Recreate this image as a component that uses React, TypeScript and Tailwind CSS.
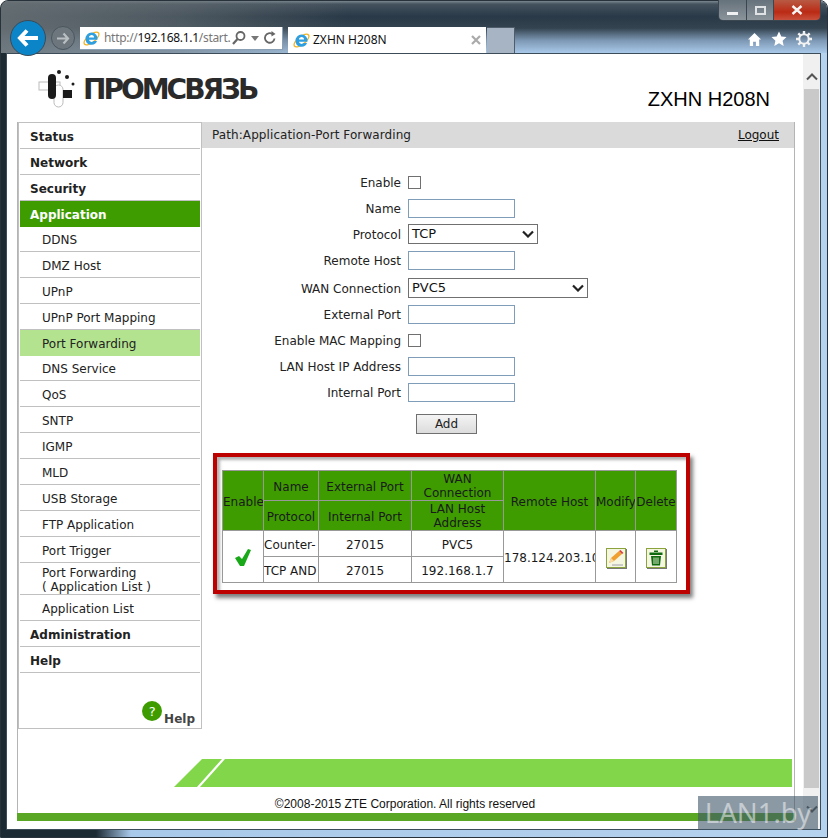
import React from "react";

const menu: { t: string; h: string; top?: boolean; kind?: string }[] = [
  { t: "Status", h: "h-[26px]", top: true },
  { t: "Network", h: "h-[26px]", top: true },
  { t: "Security", h: "h-[26px]", top: true },
  { t: "Application", h: "h-[26px]", top: true, kind: "on" },
  { t: "DDNS", h: "h-[25px]" },
  { t: "DMZ Host", h: "h-[26px]" },
  { t: "UPnP", h: "h-[26px]" },
  { t: "UPnP Port Mapping", h: "h-[26px]" },
  { t: "Port Forwarding", h: "h-[26px]", kind: "sel" },
  { t: "DNS Service", h: "h-[25px]" },
  { t: "QoS", h: "h-[26px]" },
  { t: "SNTP", h: "h-[26px]" },
  { t: "IGMP", h: "h-[26px]" },
  { t: "MLD", h: "h-[26px]" },
  { t: "USB Storage", h: "h-[26px]" },
  { t: "FTP Application", h: "h-[26px]" },
  { t: "Port Trigger", h: "h-[26px]" },
  { t: "Port Forwarding\n( Application List )", h: "h-[32px]" },
  { t: "Application List", h: "h-[26px]" },
  { t: "Administration", h: "h-[26px]", top: true },
  { t: "Help", h: "h-[26px]", top: true },
];

function IE({ s = 17 }: { s?: number }) {
  return (
    <svg width={s} height={s} viewBox="0 0 20 20" className="shrink-0">
      <ellipse cx="10" cy="10" rx="10.500" ry="4.500" transform="rotate(-38 10 10)" fill="none" stroke="#f0b429" strokeWidth="1.500" />
      <path
        d="M10 3a7 7 0 0 0-7 7.500A7 7 0 0 0 16.500 13h-4a3.200 3.200 0 0 1-5.500-1.500h10A7 7 0 0 0 10 3zM7 8.800a3 3 0 0 1 6 0z"
        fill="#2f9fe0"
        fillRule="evenodd"
      />
    </svg>
  );
}

function TextInput() {
  return <input className="w-[107px] h-[19px] border border-[#7f9db9] bg-white" />;
}
function Check() {
  return <span className="block w-[13px] h-[13px] border border-[#707070] bg-white" />;
}
function Sel({ w, v }: { w: string; v: string }) {
  return (
    <div className={`relative ${w} h-[20px] border border-[#707070] bg-white pl-[3px] text-[13px] leading-[17px] text-[#111]`}>
      {v}
      <svg width="12" height="8" viewBox="0 0 12 8" className="absolute right-[3px] top-[5px]">
        <path d="M1 1.500l5 5 5-5" fill="none" stroke="#222" strokeWidth="2.200" />
      </svg>
    </div>
  );
}
function Row({ label, h, children }: { label: string; h: string; children: React.ReactNode }) {
  return (
    <div className={`flex items-center ${h}`}>
      <div className="w-[199px] pt-[2px] text-right text-[#222]">{label}</div>
      <div className="ml-[7px]">{children}</div>
    </div>
  );
}

const th = "border border-[#999] font-normal text-center leading-[14px] px-0 pb-0 pt-[2px] overflow-hidden";
const th2 = "border border-[#999] font-normal text-center leading-[14px] px-0 pb-0 pt-[1px] overflow-hidden";
const td = "border border-[#999] text-center px-0 pb-0 pt-[2px] overflow-hidden whitespace-nowrap";

export default function App() {
  return (
    <div className="relative w-[828px] h-[838px] overflow-hidden bg-white font-['DejaVu_Sans',sans-serif] text-[12px]">
      <div className="w-full h-full flex flex-col rounded-t-[8px] border border-[#27323a] overflow-hidden bg-[linear-gradient(90deg,#1c2a34_0,#1c2a34_95px,#a9c9ea_130px,#b5d2ee_100%)]">
        {/* browser chrome */}
        <div className="h-[52px] shrink-0 flex items-start pl-[9px] pr-[15px] bg-[linear-gradient(90deg,rgba(104,112,116,0.9)_0,rgba(104,112,116,0.55)_22%,rgba(0,0,0,0)_42%),linear-gradient(180deg,#7b8890_0,#44525e_6%,#293947_30%,#33434f_52%,#7d98b4_76%,#a9c9ea_100%)]">
          <div className="relative z-10 mt-[19px] w-[36px] h-[36px] rounded-full bg-[#0b85c8] border border-[#3b4a55] flex items-center justify-center shrink-0">
            <svg width="22" height="20" viewBox="0 0 22 20">
              <path d="M10 2.500L3 10l7 7.500M4 10h17" fill="none" stroke="#fff" strokeWidth="4" />
            </svg>
          </div>
          <div className="mt-[25px] ml-[5px] w-[24px] h-[24px] rounded-full border border-[#4a5660] bg-[#6d767c] flex items-center justify-center shrink-0">
            <svg width="14" height="13" viewBox="0 0 14 13">
              <path d="M7.500 1.500L12 6.500l-4.500 5M12 6.500H1" fill="none" stroke="#b9bec2" strokeWidth="2.200" />
            </svg>
          </div>
          <div className="mt-[26px] ml-[5px] w-[203px] h-[23px] bg-white border-b border-r border-[#8aa0b5] flex items-center pl-[3px] shrink-0 font-['Noto_Sans',sans-serif] text-[12px]">
            <IE />
            <span className="ml-[4px] w-[124px] whitespace-nowrap tracking-[-0.3px] text-[#777]">
              http://<span className="text-[#111]">192.168.1.1</span>/start.
            </span>
            <svg width="16" height="16" viewBox="0 0 16 16" className="ml-[3px] shrink-0">
              <circle cx="9.500" cy="6" r="4" fill="none" stroke="#666" strokeWidth="1.800" />
              <path d="M6.500 9L2 14" stroke="#666" strokeWidth="2.200" />
            </svg>
            <svg width="8" height="5" viewBox="0 0 8 5" className="ml-[4px] shrink-0">
              <path d="M0 0h8L4 5z" fill="#777" />
            </svg>
            <svg width="14" height="14" viewBox="0 0 14 14" className="ml-[4px] shrink-0">
              <path d="M11.500 7.500A4.800 4.800 0 1 1 9.500 3" fill="none" stroke="#666" strokeWidth="1.800" />
              <path d="M8.500 0l4 3-4 2.500z" fill="#666" />
            </svg>
          </div>
          <div className="mt-[26px] ml-[5px] w-[198px] h-[26px] bg-white flex items-center pl-[5px] shrink-0 font-['Noto_Sans',sans-serif] text-[12px] text-[#111]">
            <IE />
            <span className="ml-[3px] flex-1">ZXHN H208N</span>
            <svg width="10" height="10" viewBox="0 0 10 10" className="mr-[5px]">
              <path d="M1 1l8 8M9 1L1 9" stroke="#aaa" strokeWidth="2.200" />
            </svg>
          </div>
          <div className="mt-[26px] ml-[1px] w-[28px] h-[26px] bg-[#a6b4c4] border-r border-t border-[#4f5d6a] shrink-0" />
          <div className="flex-1" />
          <div className="mt-[30px] flex items-center gap-[9px] text-white">
            <svg width="15" height="15" viewBox="0 0 16 16">
              <path d="M8 1L1 8h2v7h3.500v-4.500h3V15H13V8h2z" fill="#fff" />
            </svg>
            <svg width="16" height="16" viewBox="0 0 16 16">
              <path d="M8 .5l2.300 5 5.200.6-3.900 3.600 1.100 5.300L8 12.300 3.300 15l1.100-5.300L.5 6.100l5.200-.6z" fill="#fff" />
            </svg>
            <svg width="16" height="16" viewBox="0 0 16 16">
              <circle cx="8" cy="8" r="4.700" fill="none" stroke="#f2f2f2" strokeWidth="2" />
              <path d="M8 0v3M8 13v3M0 8h3M13 8h3M2.300 2.300l2.200 2.200M11.500 11.500l2.200 2.200M13.700 2.300l-2.200 2.200M4.500 11.500l-2.200 2.200" stroke="#f2f2f2" strokeWidth="2.400" />
            </svg>
          </div>
        </div>

        {/* page frame */}
        <div className="relative flex-1 min-h-0 ml-[5px] mr-[6px] mb-[7px] flex bg-white border border-[#3c4c59]">
          <div className="flex-1 min-w-0 pl-[10px] pr-[8px] flex flex-col">
            <div className="h-[68px] shrink-0 flex items-start pl-[21px]">
              <svg width="38" height="42" viewBox="0 0 38 42" className="mt-[15px] shrink-0">
                <rect x="1" y="13" width="21" height="8" fill="#fff" stroke="#bbb" />
                <rect x="16" y="16" width="9" height="22" rx="4.500" fill="#fff" stroke="#bbb" />
                <rect x="10" y="5" width="8" height="25" rx="4" fill="#1b1b1b" />
                <rect x="25" y="21" width="9" height="8" fill="#1b1b1b" />
                <circle cx="21" cy="3" r="2" fill="#1b1b1b" />
                <circle cx="29" cy="8" r="2" fill="#1b1b1b" />
                <circle cx="35" cy="15" r="1.500" fill="#1b1b1b" />
              </svg>
              <div className="ml-[7px] mt-[19px] text-[28px] leading-[34px] font-bold tracking-[-3px] text-[#2a2a2a] whitespace-nowrap">
                ПРОМСВЯЗЬ
              </div>
              <div className="flex-1" />
              <div className="mt-[33px] mr-[25px] font-['Liberation_Sans',sans-serif] text-[20px] leading-[24px] text-black">
                ZXHN H208N
              </div>
            </div>

            <div className="border-x border-[#b4b4b4] flex-1 min-h-0 flex flex-col">
              <div className="h-[607px] shrink-0 flex">
                {/* sidebar */}
                <div className="w-[184px] shrink-0 border border-[#c0c0c0] pl-[1px] pr-[1px] flex flex-col">
                  {menu.map((m) => (
                    <div
                      key={m.t}
                      className={`${m.h} shrink-0 flex items-center pt-[2px] whitespace-pre-line leading-[14px] ${m.top ? "pl-[10px] font-bold" : "pl-[22px]"} ${
                        m.kind === "on"
                          ? "bg-[#3e9c00] text-white"
                          : m.kind === "sel"
                            ? "bg-[#b4e38f] text-[#222]"
                            : "border-b border-[#c0c0c0] text-[#222]"
                      } ${m.top && !m.kind ? "text-[#111]" : ""}`}
                    >
                      {m.t}
                    </div>
                  ))}
                  <div className="flex-1 flex items-end justify-end pr-[5px] pb-[2px]">
                    <div className="w-[20px] h-[20px] mb-[5px] rounded-full bg-[#3e9c00] text-white flex items-center justify-center text-[13px] leading-none">
                      ?
                    </div>
                    <div className="ml-[2px] font-bold text-[#444] leading-[14px]">Help</div>
                  </div>
                </div>

                {/* main */}
                <div className="flex-1 min-w-0">
                  <div className="h-[26px] bg-[#dadada] flex items-center justify-between pl-[10px] pr-[15px] text-[#222]">
                    <span className="tracking-[0.09px]">Path:Application-Port Forwarding</span>
                    <span className="underline text-[#111]">Logout</span>
                  </div>
                  <div className="pt-[21px]">
                    <Row label="Enable" h="h-[26px]"><Check /></Row>
                    <Row label="Name" h="h-[26px]"><TextInput /></Row>
                    <Row label="Protocol" h="h-[26px]"><Sel w="w-[130px]" v="TCP" /></Row>
                    <Row label="Remote Host" h="h-[26px]"><TextInput /></Row>
                    <Row label="WAN Connection" h="h-[28px] pt-[2px]"><Sel w="w-[180px]" v="PVC5" /></Row>
                    <Row label="External Port" h="h-[26px]"><TextInput /></Row>
                    <Row label="Enable MAC Mapping" h="h-[26px]"><Check /></Row>
                    <Row label="LAN Host IP Address" h="h-[26px]"><TextInput /></Row>
                    <Row label="Internal Port" h="h-[26px]"><TextInput /></Row>
                  </div>
                  <button className="block mt-[9px] ml-[214px] w-[61px] h-[20px] border border-[#707070] bg-[linear-gradient(180deg,#f4f4f4,#dcdcdc)] text-[#222] leading-[18px]">
                    Add
                  </button>

                  {/* highlighted table */}
                  <div className="mt-[19px] ml-[11px] w-[477px] h-[141px] border-[4px] border-[#bd0000] pl-[5px] pt-[13px] shadow-[3px_4px_4px_rgba(0,0,0,0.5),inset_3px_3px_3px_rgba(0,0,0,0.3)]">
                    <table className="table-fixed border-collapse w-[454px] text-[#1a1a1a]">
                      <colgroup>
                        <col className="w-[41px]" />
                        <col className="w-[55px]" />
                        <col className="w-[93px]" />
                        <col className="w-[92px]" />
                        <col className="w-[92px]" />
                        <col className="w-[40px]" />
                        <col className="w-[41px]" />
                      </colgroup>
                      <tbody>
                        <tr className="h-[30px] bg-[#3e9c00]">
                          <th rowSpan={2} className={th}>Enable</th>
                          <th className={th}>Name</th>
                          <th className={th}>External Port</th>
                          <th className={th2}>WAN<br />Connection</th>
                          <th rowSpan={2} className={th}>Remote Host</th>
                          <th rowSpan={2} className={th}>Modify</th>
                          <th rowSpan={2} className={th}>Delete</th>
                        </tr>
                        <tr className="h-[30px] bg-[#3e9c00]">
                          <th className={th}>Protocol</th>
                          <th className={th}>Internal Port</th>
                          <th className={th2}>LAN Host<br />Address</th>
                        </tr>
                        <tr className="h-[26px]">
                          <td rowSpan={2} className={td}>
                            <svg width="16" height="18" viewBox="0 0 16 18" className="mx-auto">
                              <path d="M0 9l4-2 3 3L13 0l3 1-7 16H5z" fill="#18a818" />
                            </svg>
                          </td>
                          <td className={`${td} text-left`}>Counter-</td>
                          <td className={td}>27015</td>
                          <td className={td}>PVC5</td>
                          <td rowSpan={2} className={`${td} text-left`}>178.124.203.100</td>
                          <td rowSpan={2} className={td}>
                            <div className="mx-auto w-[20px] h-[20px] border border-[#8aa33c] bg-[#f4f6e2] shadow-[1px_1px_0_#777]">
                              <svg width="18" height="18" viewBox="0 0 18 18">
                                <path d="M2 14l2-5 8-7 3 3-8 7z" fill="#f0a030" />
                                <path d="M12 2l1.500-1 3 3-1.500 1z" fill="#d84040" />
                                <path d="M2 14l5-2-3-3z" fill="#f8dca8" />
                                <path d="M5 16h11" stroke="#bbb" strokeWidth="1.500" />
                              </svg>
                            </div>
                          </td>
                          <td rowSpan={2} className={td}>
                            <div className="mx-auto w-[20px] h-[20px] border border-[#8aa33c] bg-[#f4f6e2] shadow-[1px_1px_0_#777]">
                              <svg width="18" height="18" viewBox="0 0 18 18">
                                <path d="M7 1.500h4V3H7zM2.500 3.500h13V6h-13zM4 7h10l-1 9.500H5z" fill="#0f6a0f" />
                                <path d="M7 8.500v6.500M9 8.500v6.500M11 8.500v6.500" stroke="#f4f6e2" strokeWidth="0.900" />
                              </svg>
                            </div>
                          </td>
                        </tr>
                        <tr className="h-[26px]">
                          <td className={`${td} text-left`}>TCP AND</td>
                          <td className={td}>27015</td>
                          <td className={td}>192.168.1.7</td>
                        </tr>
                      </tbody>
                    </table>
                  </div>
                </div>
              </div>

              {/* footer */}
              <div className="mt-[30px] ml-[156px] mr-[2px] h-[28px] shrink-0 bg-[#82d64a] [clip-path:polygon(0_100%,28px_0,48px_0,23px_100%,26px_100%,51px_0,100%_0,100%_100%)]" />
              <div className="mt-[10px] text-center font-['Liberation_Sans',sans-serif] text-[12px] leading-[14px] text-[#111] pr-[2px]">
                ©2008-2015 ZTE Corporation. All rights reserved
              </div>
            </div>
            <div className="h-[8px] shrink-0 mb-[8px] bg-[#5aa726]" />
          </div>

          {/* scrollbar */}
          <div className="w-[17px] shrink-0 bg-[#f0f0f0] flex flex-col items-center">
            <div className="h-[35px] w-full flex items-end justify-center pb-[8px]">
              <svg width="12" height="8" viewBox="0 0 12 8">
                <path d="M1 6.500l5-5 5 5" fill="none" stroke="#555" strokeWidth="2" />
              </svg>
            </div>
            <div className="flex-1 w-[15px] bg-[#c9c9c9]" />
            <div className="h-[41px] w-full flex items-center justify-center">
              <svg width="12" height="8" viewBox="0 0 12 8">
                <path d="M1 1.500l5 5 5-5" fill="none" stroke="#555" strokeWidth="2" />
              </svg>
            </div>
          </div>
        </div>
      </div>

      {/* window caption buttons */}
      <div className="absolute left-[718px] top-0 w-[103px] h-[21px] flex border border-t-0 border-[#3a4650] rounded-b-[5px] overflow-hidden">
        <div className="w-[28px] flex items-end justify-center pb-[5px] border-r border-[#3a4650] bg-[linear-gradient(180deg,#66727c,#8a939a)]">
          <span className="block w-[11px] h-[3px] bg-[#eef0f2]" />
        </div>
        <div className="w-[27px] flex items-center justify-center border-r border-[#3a4650] bg-[linear-gradient(180deg,#66727c,#8a939a)]">
          <span className="block w-[11px] h-[9px] border-2 border-[#dfe3e6]" />
        </div>
        <div className="flex-1 flex items-center justify-center bg-[linear-gradient(180deg,#b85a44,#bb2a14_60%,#c8503c)]">
          <svg width="12" height="10" viewBox="0 0 12 10">
            <path d="M1.500 1l9 8M10.500 1l-9 8" stroke="#f4f4f4" strokeWidth="2.400" />
          </svg>
        </div>
      </div>

      {/* watermark */}
      <div className="absolute left-[698px] top-[796px] w-[120px] h-[34px] bg-[#3d5568]/60 flex items-center justify-center font-['Noto_Sans',sans-serif] text-[27.500px] leading-[34px] text-white/50">
        LAN1.by
      </div>
    </div>
  );
}
